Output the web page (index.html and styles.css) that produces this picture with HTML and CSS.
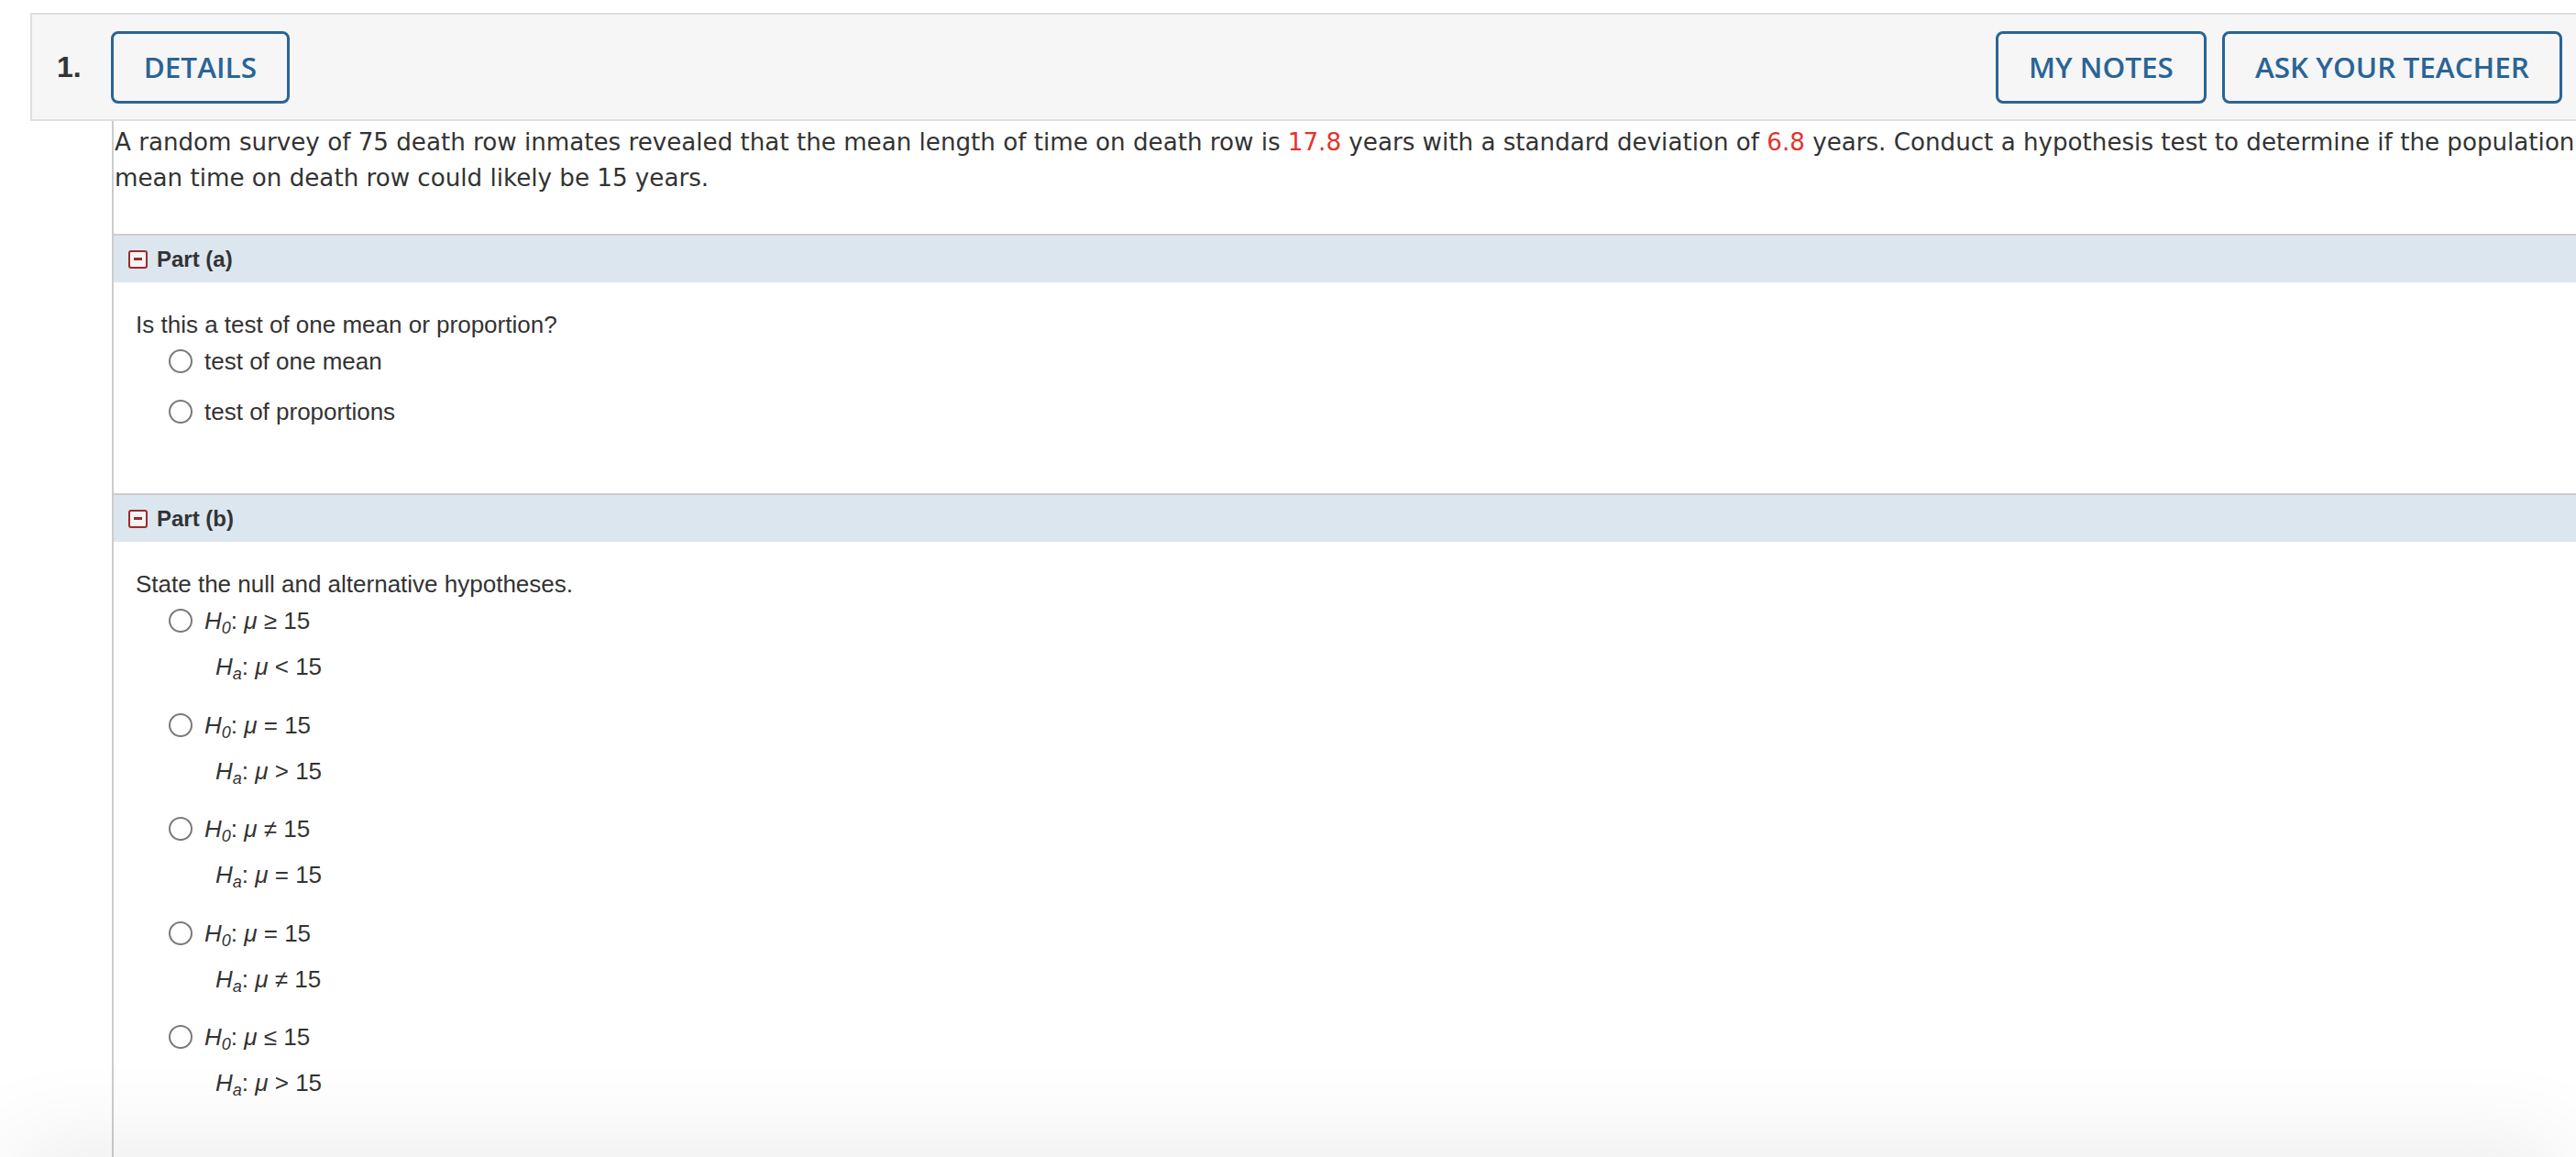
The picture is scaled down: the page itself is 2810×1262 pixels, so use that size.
FILE: index.html
```html
<!DOCTYPE html>
<html lang="en">
<head>
<meta charset="utf-8">
<title>Question 1</title>
<link rel="stylesheet" href="styles.css">
</head>
<body>
<div class="page">
  <div class="qhead">
    <span class="qnum">1.</span>
    <button class="btn">DETAILS</button>
    <div class="spacer"></div>
    <button class="btn">MY NOTES</button>
    <button class="btn btn-gap">ASK YOUR TEACHER</button>
  </div>
  <div class="content">
    <p class="stem">A random survey of 75 death row inmates revealed that the mean length of time on death row is <span class="red">17.8</span> years with a standard deviation of <span class="red">6.8</span> years. Conduct a hypothesis test to determine if the population<br>mean time on death row could likely be 15 years.</p>

    <section class="part">
      <div class="part-bar"><span class="toggle"></span><span class="part-title">Part (a)</span></div>
      <div class="part-body part-a">
        <p class="q">Is this a test of one mean or proportion?</p>
        <ul class="opts">
          <li class="opt"><span class="radio"></span><span>test of one mean</span></li>
          <li class="opt"><span class="radio"></span><span>test of proportions</span></li>
        </ul>
      </div>
    </section>

    <section class="part">
      <div class="part-bar"><span class="toggle"></span><span class="part-title">Part (b)</span></div>
      <div class="part-body">
        <p class="q">State the null and alternative hypotheses.</p>
        <ul class="hyps">
          <li class="hyp">
            <div class="hline"><span class="radio"></span><span class="math"><i>H<sub>0</sub></i>: <i>μ</i> ≥ 15</span></div>
            <div class="hline alt"><span class="math"><i>H<sub>a</sub></i>: <i>μ</i> &lt; 15</span></div>
          </li>
          <li class="hyp">
            <div class="hline"><span class="radio"></span><span class="math"><i>H<sub>0</sub></i>: <i>μ</i> = 15</span></div>
            <div class="hline alt"><span class="math"><i>H<sub>a</sub></i>: <i>μ</i> &gt; 15</span></div>
          </li>
          <li class="hyp">
            <div class="hline"><span class="radio"></span><span class="math"><i>H<sub>0</sub></i>: <i>μ</i> ≠ 15</span></div>
            <div class="hline alt"><span class="math"><i>H<sub>a</sub></i>: <i>μ</i> = 15</span></div>
          </li>
          <li class="hyp">
            <div class="hline"><span class="radio"></span><span class="math"><i>H<sub>0</sub></i>: <i>μ</i> = 15</span></div>
            <div class="hline alt"><span class="math"><i>H<sub>a</sub></i>: <i>μ</i> ≠ 15</span></div>
          </li>
          <li class="hyp">
            <div class="hline"><span class="radio"></span><span class="math"><i>H<sub>0</sub></i>: <i>μ</i> ≤ 15</span></div>
            <div class="hline alt"><span class="math"><i>H<sub>a</sub></i>: <i>μ</i> &gt; 15</span></div>
          </li>
        </ul>
      </div>
    </section>
  </div>
</div>
<div class="shade"></div>
</body>
</html>
```
FILE: styles.css
```css
html, body {
  margin: 0;
  padding: 0;
  height: 100%;
  overflow: hidden;
  background: #ffffff;
}

body {
  font-family: "Liberation Sans", Arial, sans-serif;
  color: #333333;
}

.page {
  padding: 14px 0 0 33px;
  height: 100%;
  box-sizing: border-box;
  display: flex;
  flex-direction: column;
}

.qhead {
  display: flex;
  align-items: center;
  height: 118px;
  box-sizing: border-box;
  background: #f6f6f6;
  border: 2px solid #dedede;
  border-right: none;
  margin-right: -12px;
  padding: 0 27px 0 27px;
}

.qnum {
  font-family: "Liberation Sans", Arial, sans-serif;
  font-weight: bold;
  font-size: 32px;
  color: #333333;
  margin-right: 32px;
}

.spacer {
  flex: 1;
}

.btn {
  height: 79px;
  box-sizing: border-box;
  padding: 0 33px;
  border: 3px solid #2a6496;
  border-radius: 8px;
  background: transparent;
  color: #2a6496;
  font-family: "Open Sans", sans-serif;
  font-weight: 600;
  font-size: 31.5px;
  line-height: 1;
  margin: 0;
}

.btn-gap {
  margin-left: 17px;
}

.content {
  flex: 1;
  margin-left: 89px;
  border-left: 2px solid #cccccc;
}

.stem {
  margin: 0;
  padding: 4px 0 0 1px;
  font-family: "DejaVu Sans", Verdana, sans-serif;
  font-size: 26.15px;
  line-height: 39px;
  color: #333333;
  white-space: nowrap;
}

.red {
  color: #e5332a;
}

.part {
  margin-top: 41px;
}

.part + .part {
  margin-top: 0;
}

.part-bar {
  display: flex;
  align-items: center;
  height: 53px;
  box-sizing: border-box;
  border-top: 2px solid #cccccc;
  background: #dce6ef;
  padding-left: 16px;
}

.toggle {
  width: 21px;
  height: 20px;
  box-sizing: border-box;
  border: 2px solid #9b2b2b;
  border-radius: 3px;
  background: #f4f4f4;
  display: flex;
  align-items: center;
  justify-content: center;
  margin-right: 10px;
}

.toggle::before {
  content: "";
  width: 9px;
  height: 3px;
  background: #9b2b2b;
}

.part-title {
  font-weight: bold;
  font-size: 24px;
  color: #333333;
}

.part-body {
  padding: 31px 0 0 24px;
}

.part-a {
  padding-bottom: 74px;
}

.q {
  margin: 0;
  font-size: 26px;
  line-height: 30px;
}

.opts, .hyps {
  list-style: none;
  margin: 10px 0 0 36px;
  padding: 0;
  display: flex;
  flex-direction: column;
}

.opts {
  gap: 25px;
}

.hyps {
  gap: 33.5px;
}

.opt, .hline {
  display: flex;
  align-items: center;
  font-size: 26px;
  line-height: 30px;
  height: 30px;
}

.hyp {
  display: flex;
  flex-direction: column;
  gap: 20px;
}

.radio {
  width: 26px;
  height: 26px;
  box-sizing: border-box;
  border: 2px solid #7a7a7a;
  border-radius: 50%;
  background: #ffffff;
  margin-right: 13px;
  flex: none;
}

.hline.alt {
  padding-left: 51px;
}

.math {
  white-space: nowrap;
}

.math sub {
  font-size: 18px;
  line-height: 0;
  vertical-align: -5px;
}

.shade {
  position: fixed;
  left: 30px;
  right: 30px;
  top: 100%;
  height: 200px;
  box-shadow: 0 0 100px 20px rgba(0, 0, 0, 0.07);
  pointer-events: none;
}
```
